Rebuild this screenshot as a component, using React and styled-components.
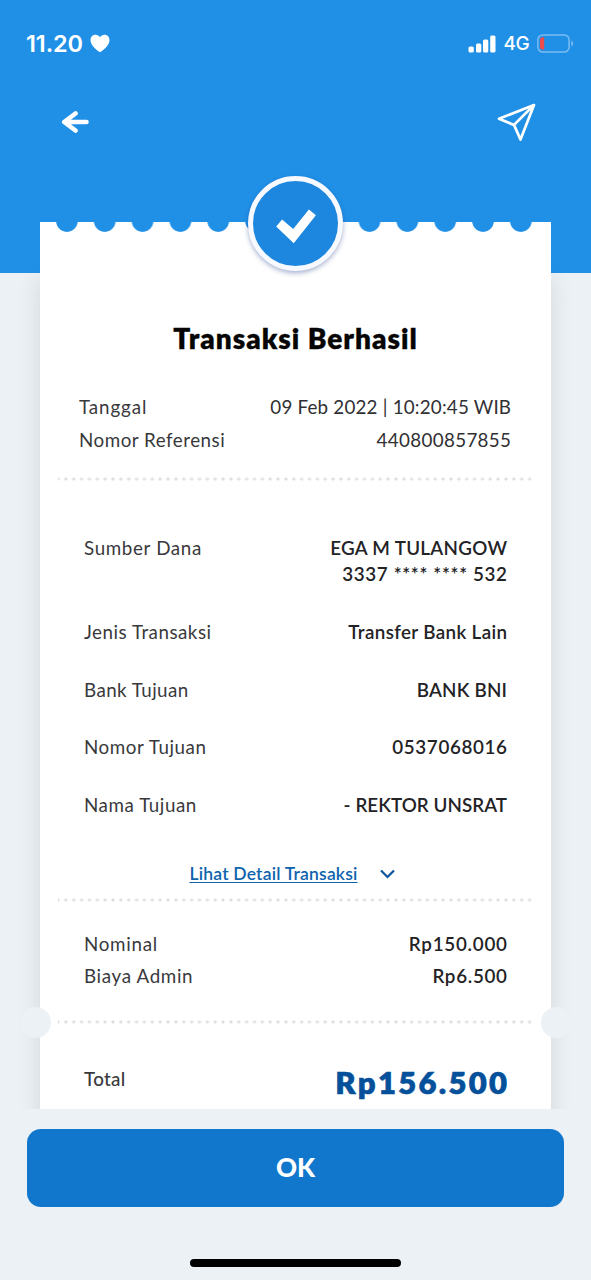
import React from 'react';
import styled, { createGlobalStyle } from 'styled-components';

const GlobalStyle = createGlobalStyle`
  * {
    box-sizing: border-box;
  }

  body {
    margin: 0;
    background: #ebf1f4;
    font-family: Lato, 'Open Sans', sans-serif;
  }
`;

const Screen = styled.div`
  display: flex;
  flex-direction: column;
  width: 591px;
  height: 1280px;
  overflow: hidden;
  background: #ebf1f4;
`;

const Header = styled.header`
  flex: none;
  height: 272.5px;
  background: #2090e7;
  color: white;
`;

const StatusBar = styled.div`
  display: flex;
  align-items: center;
  justify-content: space-between;
  height: 87px;
  padding: 0 17.5px 0 26px;
  font-family: Inter, sans-serif;
`;

const StatusGroup = styled.div`
  display: flex;
  align-items: center;
  gap: ${props => props.$gap}px;
`;

const Time = styled.span`
  font-size: 23.5px;
  font-weight: 600;
  letter-spacing: -0.1px;
`;

const Network = styled.span`
  font-size: 19px;
  font-weight: 500;
  letter-spacing: -0.6px;
`;

const NavBar = styled.nav`
  display: flex;
  align-items: center;
  justify-content: space-between;
  height: 70px;
  padding: 0 55px 0 61px;

  svg {
    display: block;
  }
`;

const Scroll = styled.main`
  position: relative;
  flex: none;
  height: 887px;
  margin-top: -50.5px;
  padding: 0 40px;
  clip-path: inset(-60px 16px 0 16px);
`;

const Card = styled.section`
  display: flex;
  flex-direction: column;
  height: 960px;
  background: white;
  box-shadow: 0 56px 22px rgba(40, 50, 70, 0.12);
`;

const Scallops = styled.div`
  flex: none;
  width: 492px;
  height: 12px;
  margin-left: 8.4px;
  background: radial-gradient(circle at 50% -1px, #2090e7 10.4px, transparent 11.2px) 0 0 / 37.83px 12px repeat-x;
`;

const Badge = styled.div`
  position: absolute;
  top: -46px;
  left: 248px;
  display: flex;
  align-items: center;
  justify-content: center;
  width: 95px;
  height: 95px;
  border: 5px solid #f6f9ff;
  border-radius: 50%;
  background: #1d87e0;
  box-shadow: 0 2px 5px rgba(30, 60, 130, 0.4);
`;

const Title = styled.h1`
  margin: 86px 0 0;
  text-align: center;
  font-size: 28px;
  font-weight: 800;
  line-height: 36px;
  letter-spacing: ${props => props.$track}px;
  color: #050505;
  -webkit-text-stroke: 0.3px #050505;
`;

const Rows = styled.div`
  display: flex;
  flex-direction: column;
  gap: ${props => props.$gap || 0}px;
  margin-top: ${props => props.$top}px;
  padding: 0 ${props => (props.$wide ? 40 : 44)}px 0 ${props => (props.$wide ? 39 : 44)}px;
`;

const Row = styled.div`
  display: flex;
  align-items: flex-start;
  justify-content: space-between;
  font-size: 18.8px;
  line-height: ${props => props.$line}px;
`;

const Label = styled.span`
  font-weight: ${props => (props.$strong ? 500 : 400)};
  letter-spacing: ${props => props.$track || 0}px;
  color: #39393c;
`;

const TotalLabel = styled(Label)`
  line-height: 38px;
`;

const Value = styled.span`
  margin-right: ${props => -(props.$track || 0)}px;
  font-weight: ${props => (props.$light ? 400 : 600)};
  letter-spacing: ${props => props.$track || 0}px;
  text-align: right;
  white-space: nowrap;
  color: ${props => (props.$light ? '#303033' : '#232326')};
`;

const Source = styled.div`
  display: flex;
  flex-direction: column;
  align-items: flex-end;
`;

const Total = styled(Value)`
  font-size: 31px;
  font-weight: 800;
  color: #04509a;
  -webkit-text-stroke: 0.6px #04509a;
`;

const Dots = styled.div`
  flex: none;
  width: 475px;
  height: 4px;
  margin: ${props => props.$top}px 0 0 17.5px;
  background: radial-gradient(circle at 0 50%, #dfdfe1 1.3px, transparent 1.9px) 0 0 / 7.87px 4px repeat-x,
    radial-gradient(circle at 100% 50%, #dfdfe1 1.3px, transparent 1.9px) 0 0 / 7.87px 4px repeat-x;
`;

const DetailLink = styled.a`
  display: flex;
  align-items: center;
  gap: 22.5px;
  height: 24px;
  margin: 43.9px 0 0 149.5px;
  color: #0e63ad;
  font-size: 17.5px;
  font-weight: 600;
  line-height: 24px;

  span {
    letter-spacing: ${props => props.$track}px;
    text-decoration: underline;
    text-decoration-thickness: 1px;
    text-underline-offset: 2px;
    text-decoration-skip-ink: none;
  }
`;

const Notch = styled.div`
  position: absolute;
  top: 785px;
  left: ${props => props.$x}px;
  width: 31px;
  height: 31px;
  border-radius: 50%;
  background: #ebf1f4;
`;

const Footer = styled.footer`
  display: flex;
  flex-direction: column;
  align-items: center;
  flex: 1;
  padding: 19.5px 27px 0;
`;

const OkButton = styled.button`
  width: 537px;
  height: 78.5px;
  padding: 0 0 2px;
  border: none;
  border-radius: 14px;
  background: #1077cc;
  color: white;
  font-family: inherit;
  font-size: 26px;
  font-weight: 900;
`;

const HomeIndicator = styled.div`
  width: 211px;
  height: 8px;
  margin-top: 52px;
  border-radius: 4px;
  background: black;
`;

const Heart = () => (
  <svg width="20" height="19" viewBox="0 0 20 19" fill="white">
    <path d="M10 18.2C8.900 17.400 0.500 12.300 0.500 6.200C0.500 2.900 2.700 0.700 5.500 0.700C7.500 0.700 9.100 1.700 10 3.300C10.900 1.700 12.500 0.700 14.500 0.700C17.300 0.700 19.500 2.900 19.500 6.200C19.500 12.300 11.100 17.400 10 18.200Z" />
  </svg>
);

const Signal = () => (
  <svg width="28" height="18" viewBox="0 0 28 18" fill="white">
    <rect x="0.500" y="11.500" width="5.300" height="6" rx="1.500" />
    <rect x="8" y="8.500" width="5.300" height="9" rx="1.500" />
    <rect x="15" y="4.500" width="5.300" height="13" rx="1.500" />
    <rect x="22.200" y="0.500" width="5.300" height="17" rx="1.500" />
  </svg>
);

const Battery = () => (
  <svg width="37" height="19" viewBox="0 0 37 19" fill="none">
    <rect x="0.900" y="0.900" width="31.200" height="17.200" rx="5" stroke="#79bcf1" strokeWidth="1.500" />
    <path d="M34.300 6.500C36.700 7.500 36.700 11.500 34.300 12.500Z" fill="#79bcf1" />
    <path d="M5.500 3.200H7.200V15.600H5.500Q3 15.600 3 13.100V5.700Q3 3.200 5.500 3.200Z" fill="#ec4d4b" />
  </svg>
);

const BackArrow = () => (
  <svg width="29" height="24" viewBox="0 0 29 24" fill="none" stroke="white" strokeWidth="4.600" strokeLinecap="round" strokeLinejoin="round">
    <path d="M14.500 3.500L3.200 12L14.500 20.500M4 12H25.500" />
  </svg>
);

const SendIcon = () => (
  <svg width="39" height="39" viewBox="0 0 39 39" fill="none" stroke="white" strokeWidth="2.700" strokeLinejoin="round">
    <path d="M37 2L2 15.700L17 21.900L23.500 36.500Z" />
    <path d="M37 2L17 21.900" />
  </svg>
);

const Check = () => (
  <svg width="42" height="40" viewBox="0.6 0 42 40" fill="white">
    <path d="M7.700 15.500L18.800 25L34.500 5.500L41.500 11.200L19.300 39.300L1.800 22.500Z" />
  </svg>
);

const details = [
  { label: 'Jenis Transaksi', labelTrack: 0.5, value: 'Transfer Bank Lain', track: 0.36 },
  { label: 'Bank Tujuan', labelTrack: 0.42, value: 'BANK BNI', track: 0.2 },
  { label: 'Nomor Tujuan', labelTrack: 0.55, value: '0537068016', track: 0.65 },
  { label: 'Nama Tujuan', labelTrack: 0.55, value: '- REKTOR UNSRAT', track: 0.05 },
];

function App() {
  return (
    <Screen>
      <GlobalStyle />
      <Header>
        <StatusBar>
          <StatusGroup $gap={7}>
            <Time>11.20</Time>
            <Heart />
          </StatusGroup>
          <StatusGroup $gap={7.5}>
            <Signal />
            <Network>4G</Network>
            <Battery />
          </StatusGroup>
        </StatusBar>
        <NavBar>
          <BackArrow />
          <SendIcon />
        </NavBar>
      </Header>

      <Scroll>
        <Card>
          <Scallops />
          <Title $track={1}>Transaksi Berhasil</Title>
          <Rows $top={35} $wide>
            <Row $line={32.6}>
              <Label $track={0.9}>Tanggal</Label>
              <Value $light $track={0.2}>09 Feb 2022 | 10:20:45 WIB</Value>
            </Row>
            <Row $line={32.6}>
              <Label $track={0.5}>Nomor Referensi</Label>
              <Value $light $track={0.34}>440800857855</Value>
            </Row>
          </Rows>
          <Dots $top={21.3} />

          <Rows $top={53.7} $gap={31.75}>
            <Row $line={26}>
              <Label $track={0.65}>Sumber Dana</Label>
              <Source>
                <Value $track={0.3}>EGA M TULANGOW</Value>
                <Value $track={0.62}>3337 **** **** 532</Value>
              </Source>
            </Row>
            {details.map(item => (
              <Row key={item.label} $line={26}>
                <Label $track={item.labelTrack}>{item.label}</Label>
                <Value $track={item.track}>{item.value}</Value>
              </Row>
            ))}
          </Rows>

          <DetailLink $track={0.2}>
            <span>Lihat Detail Transaksi</span>
            <svg width="15" height="10" viewBox="0 0 15 10" fill="none" stroke="#0b559d" strokeWidth="2.200">
              <path d="M1 1.500L7.500 8L14 1.500" />
            </svg>
          </DetailLink>
          <Dots $top={11.8} />

          <Rows $top={26.5}>
            <Row $line={31.7}>
              <Label $track={0.7}>Nominal</Label>
              <Value $track={0.75}>Rp150.000</Value>
            </Row>
            <Row $line={31.7}>
              <Label $track={0.65}>Biaya Admin</Label>
              <Value $track={0.7}>Rp6.500</Value>
            </Row>
          </Rows>
          <Dots $top={27.9} />

          <Rows $top={36}>
            <Row $line={44}>
              <TotalLabel $strong $track={0.3}>Total</TotalLabel>
              <Total $track={2.3}>Rp156.500</Total>
            </Row>
          </Rows>
        </Card>
        <Notch $x={19.5} />
        <Notch $x={540.5} />
        <Badge>
          <Check />
        </Badge>
      </Scroll>

      <Footer>
        <OkButton>OK</OkButton>
        <HomeIndicator />
      </Footer>
    </Screen>
  );
}

export default App;
